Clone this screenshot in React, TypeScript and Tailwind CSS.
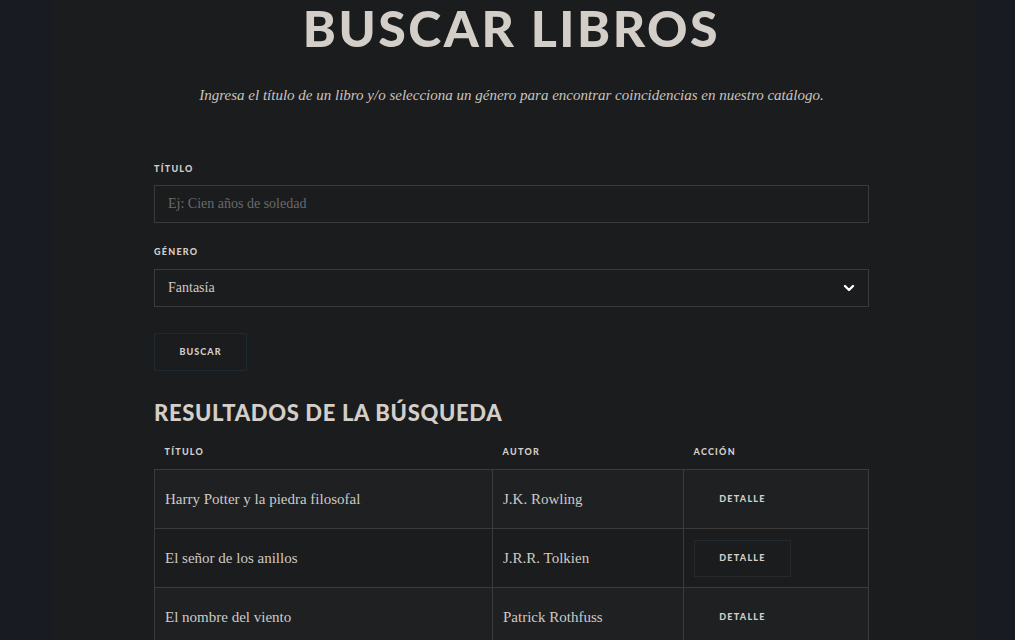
import { ChevronDown } from 'lucide-react';

const books = [
  { title: 'Harry Potter y la piedra filosofal', author: 'J.K. Rowling' },
  { title: 'El señor de los anillos', author: 'J.R.R. Tolkien' },
  { title: 'El nombre del viento', author: 'Patrick Rothfuss' },
];

const serif = "font-['Liberation_Serif',serif]";
const sans = "font-['Lato',sans-serif]";

export default function App() {
  return (
    <div className="h-[640px] overflow-hidden bg-[#181c22]">
      <main className="ml-[52px] w-[923px] h-full bg-[#1b1c1e] pl-[102px] pr-[106px]">
        {/* Header */}
        <h1 className={`${sans} text-center text-[50px] leading-[56px] font-black tracking-[0.05em] text-[#d3cec8]`}>
          BUSCAR LIBROS
        </h1>
        <p className={`${serif} italic text-center text-[15px] text-[#c9c4be] mt-[28px]`}>
          Ingresa el título de un libro y/o selecciona un género para encontrar coincidencias en nuestro catálogo.
        </p>

        {/* Form */}
        <form className="mt-[55px] flex flex-col">
          <label className={`${sans} text-[9px] font-black tracking-[0.14em] text-[#d3cec8]`}>TÍTULO</label>
          <input
            placeholder="Ej: Cien años de soledad"
            className={`${serif} mt-[10px] h-[38px] w-full border border-[#3b3b3b] bg-[#1b1c1e] px-[13px] text-[14px] text-[#cfcac4] placeholder:text-[#6a6a6a] outline-none`}
          />
          <label className={`${sans} mt-[22px] text-[9px] font-black tracking-[0.14em] text-[#d3cec8]`}>GÉNERO</label>
          <div className="relative mt-[10px]">
            <div className={`${serif} flex h-[38px] items-center border border-[#3b3b3b] px-[13px] text-[14px] text-[#cfcac4]`}>
              Fantasía
            </div>
            <ChevronDown className="absolute right-[12px] top-[11px] h-[16px] w-[16px] text-white" strokeWidth={3.5} />
          </div>
          <div className="mt-[26px]">
            <button
              type="button"
              className={`${sans} h-[38px] w-[93px] border border-[#1f2a30] text-[9px] font-black tracking-[0.12em] text-[#d3cec8]`}
            >
              BUSCAR
            </button>
          </div>
        </form>

        {/* Results */}
        <h2 className={`${sans} mt-[25px] text-[22px] font-black tracking-[0.03em] text-[#d3cec8]`}>
          RESULTADOS DE LA BÚSQUEDA
        </h2>
        <table className="mt-[16px] w-full border-collapse">
          <thead>
            <tr className={`${sans} text-left text-[9px] font-black tracking-[0.14em] text-[#d3cec8]`}>
              <th className="w-[338px] px-[10px] pb-[11px] font-black">TÍTULO</th>
              <th className="w-[191px] px-[10px] pb-[11px] font-black">AUTOR</th>
              <th className="px-[10px] pb-[11px] font-black">ACCIÓN</th>
            </tr>
          </thead>
          <tbody>
            {books.map((b, i) => (
              <tr key={b.title} className={i % 2 === 0 ? 'bg-[#1e2022]' : 'bg-[#1b1c1e]'}>
                <td className={`${serif} h-[59px] border border-[#3b3b3b] px-[10px] text-[15px] text-[#cfcac4]`}>{b.title}</td>
                <td className={`${serif} border border-[#3b3b3b] px-[10px] text-[15px] text-[#cfcac4]`}>{b.author}</td>
                <td className="border border-[#3b3b3b] px-[10px]">
                  <button
                    type="button"
                    className={`${sans} h-[37px] w-[97px] border ${i === 1 ? 'border-[#232b31]' : 'border-[#1e2327]'} text-[9px] font-black tracking-[0.14em] text-[#d3cec8]`}
                  >
                    DETALLE
                  </button>
                </td>
              </tr>
            ))}
          </tbody>
        </table>
      </main>
    </div>
  );
}
